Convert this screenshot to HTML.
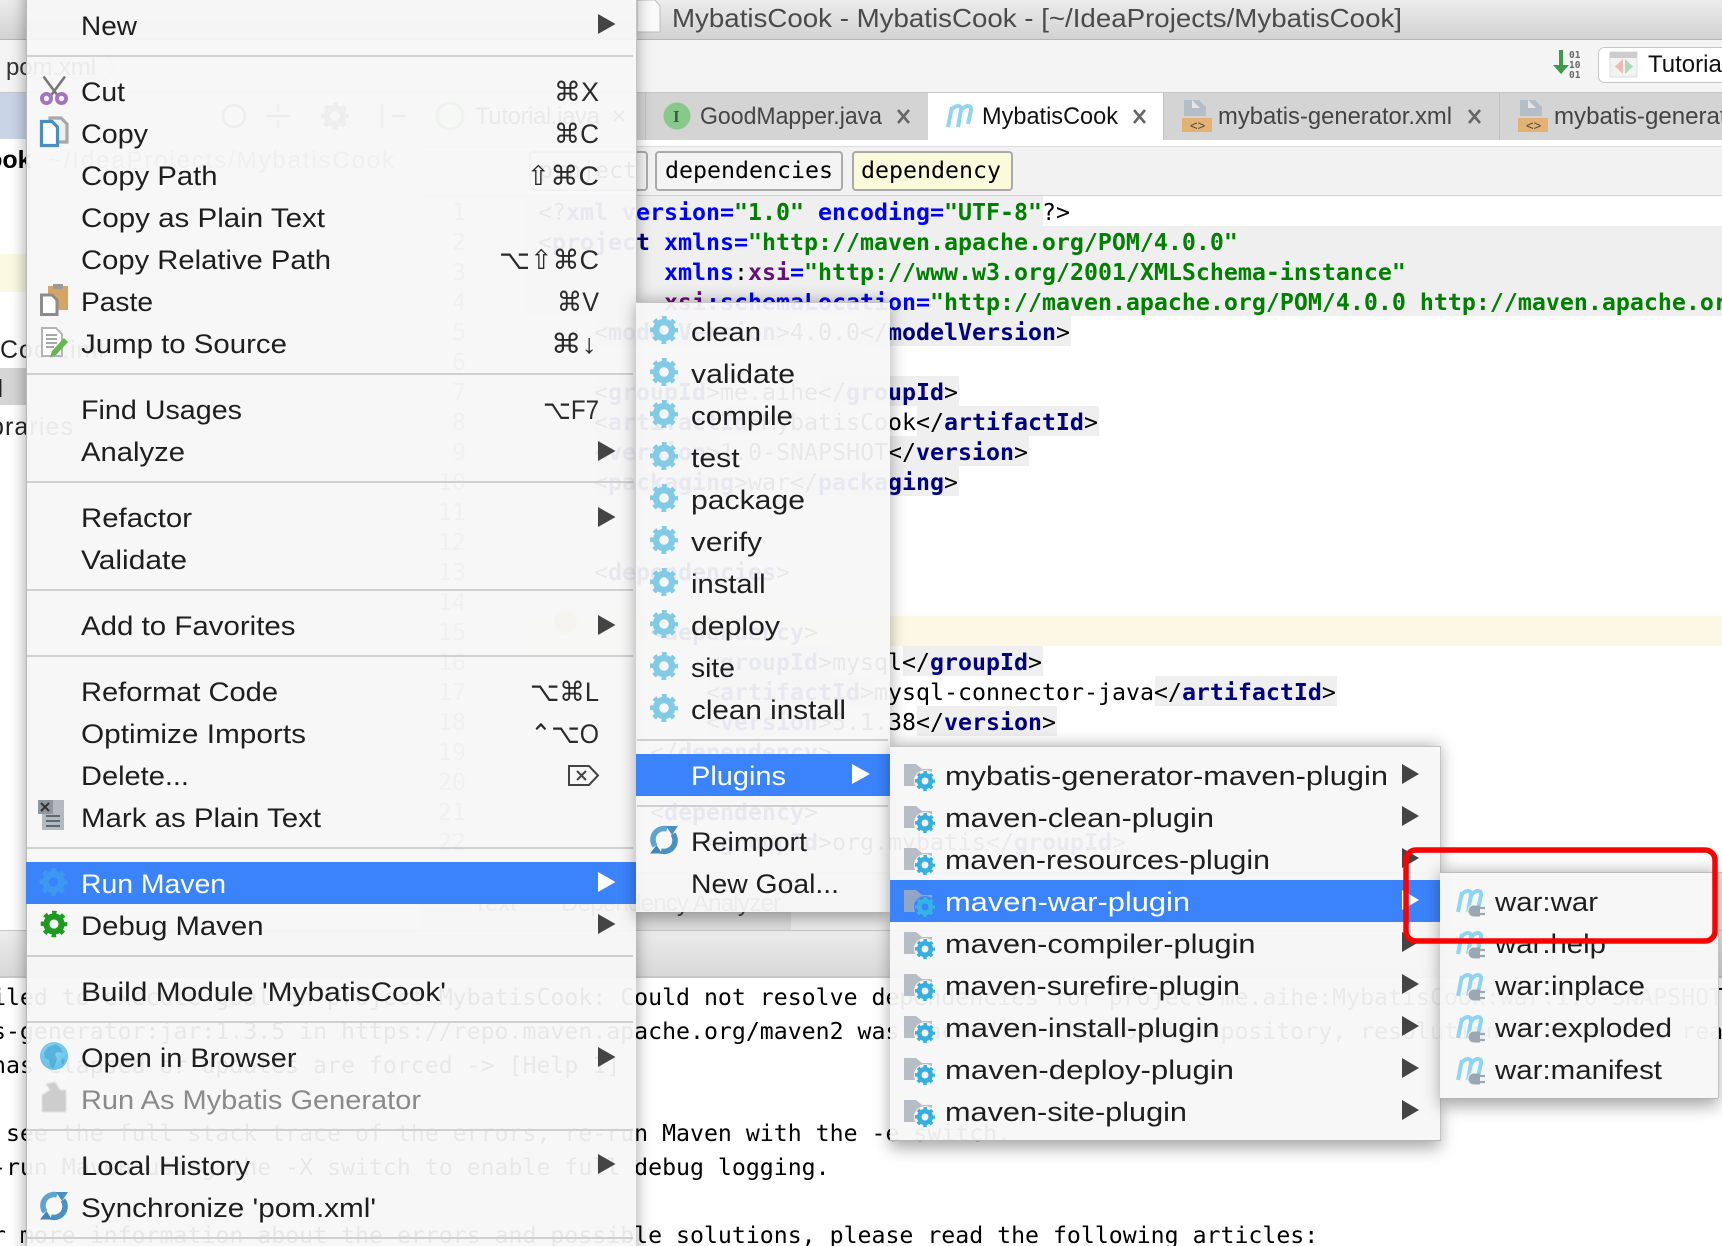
<!DOCTYPE html>
<html><head><meta charset="utf-8"><title>MybatisCook</title>
<style>
html,body{margin:0;padding:0;background:#fff;width:1722px;height:1246px;overflow:hidden}
svg{display:block}
text{white-space:pre}
.m{font:27px "Liberation Sans","DejaVu Sans",sans-serif;fill:#1e1e1e}
.k{font:27px "Liberation Sans","DejaVu Sans",sans-serif;fill:#2a2a2a}
.c{font:23.25px "DejaVu Sans Mono","Liberation Mono",monospace;fill:#000}
.o{font:23.2px "DejaVu Sans Mono","Liberation Mono",monospace;fill:#000}
.t{font-weight:bold;fill:#000080}
.a{font-weight:bold;fill:#0000ff}
.s{font-weight:bold;fill:#008000}
.p{font-weight:bold;fill:#660e7a}
.tab{font:24px "Liberation Sans",sans-serif;fill:#444}
.n{font:23.25px "DejaVu Sans Mono","Liberation Mono",monospace;fill:#9a9a9a}
</style></head><body>
<svg xmlns="http://www.w3.org/2000/svg" width="1722" height="1246" viewBox="0 0 1722 1246">
<defs>
<linearGradient id="tg" x1="0" y1="0" x2="0" y2="1"><stop offset="0" stop-color="#ececec"/><stop offset="1" stop-color="#d2d2d2"/></linearGradient>
<linearGradient id="bg" x1="0" y1="0" x2="0" y2="1"><stop offset="0" stop-color="#ececec"/><stop offset="1" stop-color="#d8d8d8"/></linearGradient>
<radialGradient id="gl" cx=".45" cy=".35" r=".75"><stop offset="0" stop-color="#8fd6f3"/><stop offset="1" stop-color="#5fbde6"/></radialGradient>
<filter id="sh" x="-20%" y="-20%" width="140%" height="140%"><feGaussianBlur stdDeviation="8"/></filter>
<clipPath id="c1"><path clip-rule="evenodd" d="M0 0H1722V1246H0ZM26 0H636V1246H26Z"/></clipPath>
<clipPath id="c2"><path clip-rule="evenodd" d="M0 0H1722V1246H0ZM636 302H890V912H636Z"/></clipPath>
<clipPath id="c3"><path clip-rule="evenodd" d="M0 0H1722V1246H0ZM890 746H1440V1140H890Z"/></clipPath>
<clipPath id="c4"><path clip-rule="evenodd" d="M0 0H1722V1246H0ZM1440 872H1718V1098H1440Z"/></clipPath>
<g id="g"><circle r="8" fill="none" stroke="currentColor" stroke-width="6.4"/><circle r="12" fill="none" stroke="currentColor" stroke-width="4" stroke-dasharray="4.71 4.71" stroke-dashoffset="2.35"/></g>
<g id="pf"><path d="M0 0h12l6 5h10v17H0z" fill="#b6bdc5"/><circle cx="21" cy="17" r="11" fill="#f6f6f6"/><use href="#g" transform="translate(21 17) scale(.72)" color="#35afe0"/></g>
<g id="pfh"><path d="M0 0h12l6 5h10v17H0z" fill="#8fa6c9"/><circle cx="21" cy="17" r="11" fill="#3a83fb"/><use href="#g" transform="translate(21 17) scale(.72)" color="#35b4e4"/></g>
<g id="mi" fill="none" stroke="#8fd4f0" stroke-width="4"><path d="M4 23L8 3M7 7C10 1 18 0 17 6L14 23M17 7C20 1 28 0 27 6L24 20"/></g>
<g id="mp"><use href="#mi"/><circle cx="20" cy="22" r="5.500" fill="#f6f6f6" stroke="#f6f6f6" stroke-width="2"/><path d="M20 16.500h6v11h-6a5.500 5.500 0 0 1 0-11z" fill="#9aa8b4"/><path d="M26 19h5M26 25h5" stroke="#9aa8b4" stroke-width="2.200"/></g>
<g id="sy" fill="none"><path d="M3-11A11 11 0 0 0-9 6" stroke="#5fa3cf" stroke-width="5.500"/><path d="M-3 11A11 11 0 0 0 9-6" stroke="#4a90c0" stroke-width="5.500"/><path d="M2-14H14L8-5Z" fill="#4a90c0"/><path d="M-14 13.500H-2L-7.500 5Z" fill="#4086b6"/></g>
<g id="xf"><path d="M2 0h15l7 7v9H2z" fill="#b4bec8"/><path d="M10 0v8h8z" fill="#e6e6e6"/><rect x="0" y="18" width="30" height="14" fill="#e3b273"/><text x="8" y="30" style="font:13px 'Liberation Sans',sans-serif;fill:#444">&lt;&gt;</text></g>
</defs>

<!-- base chrome -->
<rect width="1722" height="1246" fill="#fff"/>
<rect width="1722" height="39" fill="url(#tg)"/>
<rect y="39" width="1722" height="1" fill="#b5b5b5"/>
<rect y="40" width="1722" height="53" fill="#f4f4f4"/>
<rect y="92" width="1722" height="1" fill="#c8c8c8"/>
<path d="M637 0H655L660 6V32H637Z" fill="#fafafa" stroke="#bdbdbd"/>
<text x="672" y="27" textLength="730" lengthAdjust="spacingAndGlyphs" style="font:26px 'Liberation Sans',sans-serif;fill:#4a4a4a">MybatisCook - MybatisCook - [~/IdeaProjects/MybatisCook]</text>

<!-- navigation right -->
<path d="M1561 50v17" stroke="#3f9a4a" stroke-width="4"/><path d="M1553 65h16l-8 9z" fill="#3f9a4a"/>
<g style="font:9.500px 'DejaVu Sans Mono',monospace;fill:#666;font-weight:bold"><text x="1569" y="58">01</text><text x="1569" y="68">10</text><text x="1569" y="78">01</text></g>
<rect x="1598.500" y="47.500" width="140" height="35" rx="6" fill="#fff" stroke="#c6c6c6"/>
<rect x="1610" y="52" width="27" height="25" fill="#f2f2f2" stroke="#ddd"/><rect x="1610" y="52" width="27" height="6" fill="#ccc"/>
<path d="M1623 59v15l-8-7.500z" fill="#eebcb4"/><path d="M1625 59v15l8-7.500z" fill="#a9dcb4"/>
<text x="1648" y="72" class="tab" style="fill:#111">Tutorial</text>

<!-- breadcrumb and tree left -->
<text x="6" y="75" textLength="90" style="font:24px 'Liberation Sans',sans-serif;fill:#333">pom.xml</text>
<path d="M102 50L114 66L102 84" fill="none" stroke="#bbb"/>
<rect y="93" width="27" height="46" fill="#c9d4e6"/>
<rect y="254" width="27" height="38" fill="#fafae3"/>
<rect y="368" width="27" height="37" fill="#d5d5d5"/>
<text x="-124" y="168" style="font:bold 25px 'Liberation Sans',sans-serif;fill:#000">MybatisCook</text>
<text x="48" y="168" textLength="346" style="font:24px 'Liberation Sans',sans-serif;fill:#888">~/IdeaProjects/MybatisCook</text>
<text x="0" y="358" textLength="104" style="font:25px 'Liberation Sans',sans-serif;fill:#222">Cook.iml</text>
<text x="-87" y="397" textLength="90" style="font:25px 'Liberation Sans',sans-serif;fill:#222">pom.xml</text>
<text x="-10" y="435" textLength="83" style="font:25px 'Liberation Sans',sans-serif;fill:#222">braries</text>
<g fill="none" stroke="#666" stroke-width="2.500"><circle cx="234" cy="116" r="11"/><path d="M266 116h24M278 104v8M278 120v8M382 104v24M392 116h14"/></g>
<use href="#g" x="335" y="116" color="#666"/>
<circle cx="450" cy="116" r="13" fill="none" stroke="#6b6" stroke-width="3"/>
<text x="475" y="124" textLength="125" class="tab" style="fill:#222">Tutorial.java</text>
<text x="612" y="124" class="tab" style="fill:#222">×</text>

<!-- editor tabs -->
<rect x="636" y="93" width="1086" height="47" fill="#d4d4d4"/>
<rect x="928" y="93" width="235" height="47" fill="#fff"/>
<rect x="645" y="93" width="1" height="47" fill="#c2c2c2"/><rect x="1163" y="93" width="1" height="47" fill="#c2c2c2"/><rect x="1499" y="93" width="1" height="47" fill="#c2c2c2"/>
<rect x="636" y="140" width="1086" height="6" fill="#fff"/>
<rect x="420" y="146" width="1302" height="1" fill="#dcdcdc"/>
<circle cx="677" cy="116" r="13.500" fill="#86c98a"/><text x="673" y="122" style="font:bold 17px 'Liberation Serif',serif;fill:#3c5f3c">I</text>
<text x="700" y="124" textLength="182" lengthAdjust="spacingAndGlyphs" class="tab">GoodMapper.java</text>
<path d="M898 110l11 13M909 110l-11 13M1134 110l11 13M1145 110l-11 13M1469 110l11 13M1480 110l-11 13" stroke="#666" stroke-width="2.600"/>
<use href="#mi" x="944" y="104" />
<text x="982" y="124" textLength="136" lengthAdjust="spacingAndGlyphs" class="tab" style="fill:#111">MybatisCook</text>
<use href="#xf" x="1182" y="100"/>
<text x="1218" y="124" textLength="234" lengthAdjust="spacingAndGlyphs" class="tab">mybatis-generator.xml</text>
<use href="#xf" x="1518" y="100"/>
<text x="1554" y="124" textLength="194" lengthAdjust="spacingAndGlyphs" class="tab">mybatis-generator</text>

<!-- breadcrumb -->
<rect x="420" y="147" width="1302" height="48" fill="#f2f2f2"/>
<rect x="420" y="195" width="1302" height="1" fill="#d2d2d2"/>
<rect x="530" y="152" width="117" height="38" rx="3" fill="#f4f4f4" stroke="#aaa" stroke-width="2"/>
<rect x="656" y="152" width="186" height="38" rx="3" fill="#f4f4f4" stroke="#aaa" stroke-width="2"/>
<rect x="853" y="152" width="159" height="38" rx="3" fill="#fbfbdc" stroke="#aaa" stroke-width="2"/>
<text class="c" x="539" y="178">project</text>
<text class="c" x="665" y="178">dependencies</text>
<text class="c" x="861" y="178">dependency</text>

<!-- gutter + editor bg -->
<rect x="420" y="196" width="106" height="677" fill="#f3f3f3"/>
<rect x="526" y="616" width="1196" height="30" fill="#fdf8e5"/>
<g fill="#efefef">
<rect x="526" y="196" width="517" height="30"/>
<rect x="526" y="226" width="1196" height="90"/>
<rect x="595" y="316" width="196" height="30"/><rect x="861" y="316" width="210" height="30"/>
<rect x="595" y="376" width="126" height="30"/><rect x="819" y="376" width="140" height="30"/>
<rect x="595" y="406" width="168" height="30"/><rect x="917" y="406" width="182" height="30"/>
<rect x="595" y="436" width="126" height="30"/><rect x="889" y="436" width="140" height="30"/>
<rect x="595" y="466" width="154" height="30"/><rect x="791" y="466" width="168" height="30"/>
<rect x="707" y="646" width="126" height="30"/><rect x="903" y="646" width="140" height="30"/>
<rect x="707" y="676" width="168" height="30"/><rect x="1155" y="676" width="182" height="30"/>
<rect x="707" y="706" width="126" height="30"/><rect x="917" y="706" width="140" height="30"/>
</g>
<g>
<text class="n" x="452" y="220">1</text><text class="n" x="452" y="250">2</text><text class="n" x="452" y="280">3</text><text class="n" x="452" y="310">4</text><text class="n" x="452" y="340">5</text><text class="n" x="452" y="370">6</text><text class="n" x="452" y="400">7</text><text class="n" x="452" y="430">8</text><text class="n" x="452" y="460">9</text><text class="n" x="438" y="490">10</text><text class="n" x="438" y="520">11</text><text class="n" x="438" y="550">12</text><text class="n" x="438" y="580">13</text><text class="n" x="438" y="610">14</text><text class="n" x="438" y="640">15</text><text class="n" x="438" y="670">16</text><text class="n" x="438" y="700">17</text><text class="n" x="438" y="730">18</text><text class="n" x="438" y="760">19</text><text class="n" x="438" y="790">20</text><text class="n" x="438" y="820">21</text><text class="n" x="438" y="850">22</text>
</g>
<circle cx="566" cy="622" r="11" fill="#e8cf70"/>

<!-- code -->
<text class="c" x="538" y="220">&lt;?<tspan class="t">xml</tspan> <tspan class="a">version=</tspan><tspan class="s">"1.0"</tspan> <tspan class="a">encoding=</tspan><tspan class="s">"UTF-8"</tspan>?&gt;</text>
<text class="c" x="538" y="250">&lt;<tspan class="t">project</tspan> <tspan class="a">xmlns=</tspan><tspan class="s">"http://maven.apache.org/POM/4.0.0"</tspan></text>
<text class="c" x="664" y="280"><tspan class="a">xmlns</tspan>:<tspan class="p">xsi</tspan><tspan class="a">=</tspan><tspan class="s">"http://www.w3.org/2001/XMLSchema-instance"</tspan></text>
<text class="c" x="664" y="310"><tspan class="p">xsi</tspan><tspan class="a">:schemaLocation=</tspan><tspan class="s">"http://maven.apache.org/POM/4.0.0 http://maven.apache.org/xsd/maven-4.0.0.xsd"</tspan>&gt;</text>
<text class="c" x="594" y="340">&lt;<tspan class="t">modelVersion</tspan>&gt;4.0.0&lt;/<tspan class="t">modelVersion</tspan>&gt;</text>
<text class="c" x="594" y="400">&lt;<tspan class="t">groupId</tspan>&gt;me.aihe&lt;/<tspan class="t">groupId</tspan>&gt;</text>
<text class="c" x="594" y="430">&lt;<tspan class="t">artifactId</tspan>&gt;MybatisCook&lt;/<tspan class="t">artifactId</tspan>&gt;</text>
<text class="c" x="594" y="460">&lt;<tspan class="t">version</tspan>&gt;1.0-SNAPSHOT&lt;/<tspan class="t">version</tspan>&gt;</text>
<text class="c" x="594" y="490">&lt;<tspan class="t">packaging</tspan>&gt;war&lt;/<tspan class="t">packaging</tspan>&gt;</text>
<text class="c" x="594" y="580">&lt;<tspan class="t">dependencies</tspan>&gt;</text>
<text class="c" x="650" y="640">&lt;<tspan class="t">dependency</tspan>&gt;</text>
<text class="c" x="706" y="670">&lt;<tspan class="t">groupId</tspan>&gt;mysql&lt;/<tspan class="t">groupId</tspan>&gt;</text>
<text class="c" x="706" y="700">&lt;<tspan class="t">artifactId</tspan>&gt;mysql-connector-java&lt;/<tspan class="t">artifactId</tspan>&gt;</text>
<text class="c" x="706" y="730">&lt;<tspan class="t">version</tspan>&gt;5.1.38&lt;/<tspan class="t">version</tspan>&gt;</text>
<text class="c" x="650" y="760">&lt;/<tspan class="t">dependency</tspan>&gt;</text>
<text class="c" x="650" y="820">&lt;<tspan class="t">dependency</tspan>&gt;</text>
<text class="c" x="706" y="850">&lt;<tspan class="t">groupId</tspan>&gt;org.mybatis&lt;/<tspan class="t">groupId</tspan>&gt;</text>

<!-- bottom of editor -->
<rect x="420" y="873" width="1302" height="57" fill="#e6e6e6"/>
<rect x="636" y="912" width="155" height="18" fill="#dedede"/>
<rect x="791" y="873" width="931" height="57" fill="#ededed"/>
<rect x="420" y="872" width="1302" height="1" fill="#c4c4c4"/>
<text x="473" y="911" class="tab">Text</text>
<text x="561" y="911" textLength="220" class="tab">Dependency Analyzer</text>
<rect y="930" width="1722" height="47" fill="url(#bg)"/>
<rect y="930" width="1722" height="1" fill="#c6c6c6"/>
<rect y="976" width="1722" height="2" fill="#c9c9c9"/>

<!-- console -->
<text class="o" x="-8" y="1005">iled to execute goal on project MybatisCook: Could not resolve dependencies for project me.aihe:MybatisCook:war:1.0-SNAPSHOT:</text>
<text class="o" x="-8" y="1039">s-generator:jar:1.3.5 in https://repo.maven.apache.org/maven2 was cached in the local repository, resolution will not be reattempted</text>
<text class="o" x="-8" y="1073">has elapsed or updates are forced -&gt; [Help 1]</text>
<text class="o" x="-8" y="1141"> see the full stack trace of the errors, re-run Maven with the -e switch.</text>
<text class="o" x="-8" y="1175">-run Maven using the -X switch to enable full debug logging.</text>
<text class="o" x="-8" y="1243">r more information about the errors and possible solutions, please read the following articles:</text>

<!-- MAIN MENU -->
<g clip-path="url(#c1)"><rect x="26" y="-30" width="610" height="1320" fill="#000" fill-opacity=".38" filter="url(#sh)"/></g>
<rect x="26" y="-4" width="610" height="1260" fill="#f7f7f7" fill-opacity=".94"/>
<rect x="26" y="-4" width="1" height="1260" fill="#b8b8b8"/>
<rect x="636" y="-4" width="1" height="306" fill="#c4c4c4"/>
<rect x="26" y="862" width="610" height="42" fill="#3a83fb"/>
<g fill="#d0d0d0"><rect x="27" y="55" width="606" height="2"/><rect x="27" y="373" width="606" height="2"/><rect x="27" y="481" width="606" height="2"/><rect x="27" y="589" width="606" height="2"/><rect x="27" y="655" width="606" height="2"/><rect x="27" y="847" width="606" height="2"/><rect x="27" y="955" width="606" height="2"/><rect x="27" y="1021" width="606" height="2"/><rect x="27" y="1129" width="606" height="2"/><rect x="27" y="1237" width="606" height="2"/></g>

<text lengthAdjust="spacingAndGlyphs" class="m" x="81" y="35" textLength="56">New</text>
<text lengthAdjust="spacingAndGlyphs" class="m" x="81" y="101" textLength="44">Cut</text>
<text lengthAdjust="spacingAndGlyphs" class="m" x="81" y="143" textLength="67">Copy</text>
<text lengthAdjust="spacingAndGlyphs" class="m" x="81" y="185" textLength="136.500">Copy Path</text>
<text lengthAdjust="spacingAndGlyphs" class="m" x="81" y="227" textLength="244">Copy as Plain Text</text>
<text lengthAdjust="spacingAndGlyphs" class="m" x="81" y="269" textLength="250">Copy Relative Path</text>
<text lengthAdjust="spacingAndGlyphs" class="m" x="81" y="311" textLength="72">Paste</text>
<text lengthAdjust="spacingAndGlyphs" class="m" x="81" y="353" textLength="206">Jump to Source</text>
<text lengthAdjust="spacingAndGlyphs" class="m" x="81" y="419" textLength="161">Find Usages</text>
<text lengthAdjust="spacingAndGlyphs" class="m" x="81" y="461" textLength="104">Analyze</text>
<text lengthAdjust="spacingAndGlyphs" class="m" x="81" y="527" textLength="111">Refactor</text>
<text lengthAdjust="spacingAndGlyphs" class="m" x="81" y="569" textLength="106">Validate</text>
<text lengthAdjust="spacingAndGlyphs" class="m" x="81" y="635" textLength="214.500">Add to Favorites</text>
<text lengthAdjust="spacingAndGlyphs" class="m" x="81" y="701" textLength="197">Reformat Code</text>
<text lengthAdjust="spacingAndGlyphs" class="m" x="81" y="743" textLength="225">Optimize Imports</text>
<text lengthAdjust="spacingAndGlyphs" class="m" x="81" y="785" textLength="108">Delete...</text>
<text lengthAdjust="spacingAndGlyphs" class="m" x="81" y="827" textLength="240">Mark as Plain Text</text>
<text lengthAdjust="spacingAndGlyphs" class="m" x="81" y="893" textLength="145" style="fill:#fff">Run Maven</text>
<text lengthAdjust="spacingAndGlyphs" class="m" x="81" y="935" textLength="182.500">Debug Maven</text>
<text lengthAdjust="spacingAndGlyphs" class="m" x="81" y="1001" textLength="365">Build Module 'MybatisCook'</text>
<text lengthAdjust="spacingAndGlyphs" class="m" x="81" y="1067" textLength="215.500">Open in Browser</text>
<text lengthAdjust="spacingAndGlyphs" class="m" x="81" y="1109" textLength="340" style="fill:#8a8a8a">Run As Mybatis Generator</text>
<text lengthAdjust="spacingAndGlyphs" class="m" x="81" y="1175" textLength="169">Local History</text>
<text lengthAdjust="spacingAndGlyphs" class="m" x="81" y="1217" textLength="295">Synchronize 'pom.xml'</text>

<text lengthAdjust="spacingAndGlyphs" class="k" x="554" y="101" textLength="45">⌘X</text>
<text lengthAdjust="spacingAndGlyphs" class="k" x="554" y="143" textLength="45">⌘C</text>
<text lengthAdjust="spacingAndGlyphs" class="k" x="526.500" y="185" textLength="72.500">⇧⌘C</text>
<text lengthAdjust="spacingAndGlyphs" class="k" x="499" y="269" textLength="100">⌥⇧⌘C</text>
<text lengthAdjust="spacingAndGlyphs" class="k" x="557" y="311" textLength="42">⌘V</text>
<text lengthAdjust="spacingAndGlyphs" class="k" x="551" y="353" textLength="46">⌘↓</text>
<text lengthAdjust="spacingAndGlyphs" class="k" x="543" y="419" textLength="56">⌥F7</text>
<text lengthAdjust="spacingAndGlyphs" class="k" x="530" y="701" textLength="69">⌥⌘L</text>
<text lengthAdjust="spacingAndGlyphs" class="k" x="530.500" y="743" textLength="68.500">⌃⌥O</text>
<path d="M569 766H589L598 775.500L589 785H569ZM577 771l9 9M586 771l-9 9" fill="none" stroke="#444" stroke-width="2"/>

<g fill="#444"><path d="M598 14l17.500 10-17.500 10zM598 441l17.500 10-17.500 10zM598 507l17.500 10-17.500 10zM598 615l17.500 10-17.500 10zM598 914l17.500 10-17.500 10zM598 1047l17.500 10-17.500 10zM598 1154l17.500 10-17.500 10z"/></g>
<path d="M598 872l17.500 10-17.500 10z" fill="#fff"/>

<!-- main menu icons -->
<path d="M43.500 76.500L58 96M65 76.500L50.500 96" stroke="#777" stroke-width="2.600" fill="none"/>
<circle cx="46.500" cy="98.500" r="4.600" fill="#f4f0f6" stroke="#a274c0" stroke-width="3.800"/><circle cx="61.500" cy="98.500" r="4.600" fill="#f4f0f6" stroke="#a274c0" stroke-width="3.800"/>
<path d="M50 118H61L67 124V142H50Z" fill="#efefef" stroke="#a8a8a8" stroke-width="3.200"/>
<path d="M41.500 121.500H52L57.500 127V145.500H41.500Z" fill="#fff" stroke="#4a8fbf" stroke-width="3.200"/>
<rect x="48" y="286" width="20" height="24" fill="#d6a566"/><rect x="53" y="284" width="10" height="5" fill="#9a9a9a"/>
<path d="M41.500 295H52L57 300V314.500H41.500Z" fill="#fff" stroke="#8c8c8c" stroke-width="3"/>
<path d="M42 328H56L62 334V356H42Z" fill="#fff" stroke="#b4b4b4" stroke-width="2"/>
<path d="M46 335h11M46 339h11M46 343h11M46 347h8" stroke="#8a8a8a" stroke-width="1.500"/>
<path d="M52 351L64 338L68 342L56 355L50 357Z" fill="#62b84f"/>
<rect x="42" y="800" width="22" height="30" fill="#b2bac1"/>
<rect x="38" y="800" width="15" height="14" fill="#8f979e"/>
<path d="M41 803l8 8M49 803l-8 8" stroke="#333" stroke-width="2"/>
<path d="M46 816h14M46 821h14M46 826h14" stroke="#5f666c" stroke-width="2"/>
<use href="#g" x="53.500" y="882" color="#3d98f0"/>
<use href="#g" transform="translate(54 924) scale(.95)" color="#1f9a20"/>
<circle cx="54" cy="1056" r="14" fill="url(#gl)"/>
<path d="M48 1047l8-3 5 4 2 5-5-1-3 2 2 5-2 6-2 4-3-3-1-6-4-2-1-5zM62 1058l3 2-2 5-2-3z" fill="#48a8d8" opacity=".75"/>
<path d="M42 1095L50 1090L46 1084L55 1082L60 1090H66V1112H42Z" fill="#cdcdcd" filter="blur(.7px)"/>
<use href="#sy" x="54" y="1206"/>

<!-- SUBMENU 1 -->
<g clip-path="url(#c2)"><rect x="636" y="302" width="254" height="616" fill="#000" fill-opacity=".34" filter="url(#sh)"/></g>
<rect x="636" y="302" width="254" height="610" fill="#f7f7f7" fill-opacity=".94"/>
<rect x="636" y="302" width="254" height="1" fill="#c4c4c4"/>
<rect x="636" y="754" width="254" height="42" fill="#3a83fb"/>
<rect x="637" y="739" width="251" height="2" fill="#d0d0d0"/><rect x="637" y="805" width="251" height="2" fill="#d0d0d0"/>
<g color="#82cbe6">
<use href="#g" x="664" y="330"/><use href="#g" x="664" y="372"/><use href="#g" x="664" y="414"/><use href="#g" x="664" y="456"/><use href="#g" x="664" y="498"/><use href="#g" x="664" y="540"/><use href="#g" x="664" y="582"/><use href="#g" x="664" y="624"/><use href="#g" x="664" y="666"/><use href="#g" x="664" y="708"/>
</g>
<text lengthAdjust="spacingAndGlyphs" class="m" x="691" y="341" textLength="70">clean</text>
<text lengthAdjust="spacingAndGlyphs" class="m" x="691" y="383" textLength="104">validate</text>
<text lengthAdjust="spacingAndGlyphs" class="m" x="691" y="425" textLength="102">compile</text>
<text lengthAdjust="spacingAndGlyphs" class="m" x="691" y="467" textLength="48.600">test</text>
<text lengthAdjust="spacingAndGlyphs" class="m" x="691" y="509" textLength="114">package</text>
<text lengthAdjust="spacingAndGlyphs" class="m" x="691" y="551" textLength="71">verify</text>
<text lengthAdjust="spacingAndGlyphs" class="m" x="691" y="593" textLength="74.600">install</text>
<text lengthAdjust="spacingAndGlyphs" class="m" x="691" y="635" textLength="89">deploy</text>
<text lengthAdjust="spacingAndGlyphs" class="m" x="691" y="677" textLength="44">site</text>
<text lengthAdjust="spacingAndGlyphs" class="m" x="691" y="719" textLength="155">clean install</text>
<text lengthAdjust="spacingAndGlyphs" class="m" x="691" y="785" textLength="95" style="fill:#fff">Plugins</text>
<text lengthAdjust="spacingAndGlyphs" class="m" x="691" y="851" textLength="116">Reimport</text>
<text lengthAdjust="spacingAndGlyphs" class="m" x="691" y="893" textLength="148">New Goal...</text>
<path d="M852 764l18 10-18 10z" fill="#fff"/>
<use href="#sy" x="664" y="840"/>

<!-- SUBMENU 2 -->
<g clip-path="url(#c3)"><rect x="890" y="746" width="550" height="402" fill="#000" fill-opacity=".34" filter="url(#sh)"/></g>
<rect x="890" y="746" width="550" height="394" fill="#f7f7f7" fill-opacity=".95"/>
<rect x="890" y="746" width="550" height="1" fill="#c4c4c4"/><rect x="1440" y="746" width="1" height="394" fill="#c4c4c4"/><rect x="890" y="1140" width="551" height="1" fill="#b5b5b5"/>
<rect x="890" y="880" width="550" height="42" fill="#3a83fb"/>
<use href="#pf" x="904" y="764"/><use href="#pf" x="904" y="806"/><use href="#pf" x="904" y="848"/><use href="#pfh" x="904" y="890"/><use href="#pf" x="904" y="932"/><use href="#pf" x="904" y="974"/><use href="#pf" x="904" y="1016"/><use href="#pf" x="904" y="1058"/><use href="#pf" x="904" y="1100"/>
<text lengthAdjust="spacingAndGlyphs" class="m" x="945" y="785" textLength="443">mybatis-generator-maven-plugin</text>
<text lengthAdjust="spacingAndGlyphs" class="m" x="945" y="827" textLength="269">maven-clean-plugin</text>
<text lengthAdjust="spacingAndGlyphs" class="m" x="945" y="869" textLength="325">maven-resources-plugin</text>
<text lengthAdjust="spacingAndGlyphs" class="m" x="945" y="911" textLength="245" style="fill:#fff">maven-war-plugin</text>
<text lengthAdjust="spacingAndGlyphs" class="m" x="945" y="953" textLength="310.500">maven-compiler-plugin</text>
<text lengthAdjust="spacingAndGlyphs" class="m" x="945" y="995" textLength="295">maven-surefire-plugin</text>
<text lengthAdjust="spacingAndGlyphs" class="m" x="945" y="1037" textLength="274.500">maven-install-plugin</text>
<text lengthAdjust="spacingAndGlyphs" class="m" x="945" y="1079" textLength="289">maven-deploy-plugin</text>
<text lengthAdjust="spacingAndGlyphs" class="m" x="945" y="1121" textLength="242">maven-site-plugin</text>
<g fill="#444"><path d="M1402 764l17 10-17 10zM1402 806l17 10-17 10zM1402 848l17 10-17 10zM1402 932l17 10-17 10zM1402 974l17 10-17 10zM1402 1016l17 10-17 10zM1402 1058l17 10-17 10zM1402 1100l17 10-17 10z"/></g>
<path d="M1402 890l17 10-17 10z" fill="#fff"/>

<!-- SUBMENU 3 -->
<g clip-path="url(#c4)"><rect x="1440" y="872" width="278" height="234" fill="#000" fill-opacity=".34" filter="url(#sh)"/></g>
<rect x="1440" y="872" width="278" height="226" fill="#f7f7f7" fill-opacity=".96"/>
<rect x="1440" y="872" width="278" height="1" fill="#bcbcbc"/><rect x="1440" y="1098" width="278" height="1" fill="#b5b5b5"/><rect x="1718" y="872" width="1" height="226" fill="#c4c4c4"/>
<use href="#mp" x="1454" y="889"/><use href="#mp" x="1454" y="931"/><use href="#mp" x="1454" y="973"/><use href="#mp" x="1454" y="1015"/><use href="#mp" x="1454" y="1057"/>
<text lengthAdjust="spacingAndGlyphs" class="m" x="1495" y="911" textLength="103">war:war</text>
<text lengthAdjust="spacingAndGlyphs" class="m" x="1495" y="953" textLength="111">war:help</text>
<text lengthAdjust="spacingAndGlyphs" class="m" x="1495" y="995" textLength="150">war:inplace</text>
<text lengthAdjust="spacingAndGlyphs" class="m" x="1495" y="1037" textLength="177">war:exploded</text>
<text lengthAdjust="spacingAndGlyphs" class="m" x="1495" y="1079" textLength="167">war:manifest</text>

<!-- red annotation -->
<rect x="1406" y="850" width="309" height="91" rx="10" fill="none" stroke="#fe0000" stroke-width="5.500"/>
</svg>
</body></html>
